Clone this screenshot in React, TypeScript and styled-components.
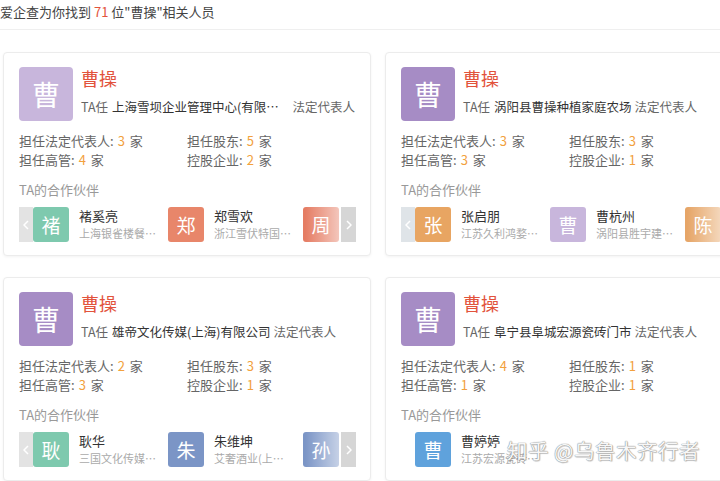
import React from "react";
import styled, { createGlobalStyle } from "styled-components";

const Global = createGlobalStyle`
  html, body { margin: 0; padding: 0; background: #fff; }
  body { font-family: "Noto Sans CJK SC", "Noto Sans", sans-serif; color: #333; }
  * { box-sizing: border-box; }
`;

const Page = styled.div`
  position: relative;
  width: 720px;
  height: 481px;
  overflow: hidden;
  background: #fff;
`;

const Header = styled.div`
  height: 30px;
  line-height: 24px;
  font-size: 13px;
  color: #444;
  border-bottom: 1px solid #efefef;
  white-space: nowrap;
`;

const Count = styled.span`
  color: #e2533c;
`;

const Grid = styled.div`
  display: grid;
  grid-template-columns: 368px 368px;
  grid-auto-rows: 204px;
  column-gap: 14px;
  row-gap: 21px;
  padding: 22px 0 0 3px;
`;

const Card = styled.div`
  background: #fff;
  border: 1px solid #ececec;
  border-radius: 4px;
  box-shadow: 0 1px 3px rgba(0, 0, 0, 0.05);
  padding: 14px 15px 0 15px;
  overflow: hidden;
`;

const Head = styled.div`
  display: flex;
  gap: 8px;
`;

const Avatar = styled.div<{ $bg: string }>`
  width: 54px;
  height: 54px;
  flex: none;
  border-radius: 4px;
  background: ${(p) => p.$bg};
  color: #fff;
  font-size: 28px;
  display: flex;
  align-items: center;
  justify-content: center;
`;

const Info = styled.div`
  display: flex;
  flex-direction: column;
  min-width: 0;
`;

const Name = styled.div`
  font-size: 18px;
  line-height: 22px;
  color: #e2533c;
`;

const Sub = styled.div`
  margin-top: 8px;
  font-size: 12.5px;
  line-height: 20px;
  color: #666;
  white-space: nowrap;
  display: flex;
  align-items: center;
`;

const Company = styled.span<{ $max?: number }>`
  color: #333;
  margin: 0 3px 0 4px;
  display: inline-block;
  max-width: ${(p) => (p.$max ? `${p.$max}px` : "none")};
  overflow: hidden;
  text-overflow: ellipsis;
  white-space: nowrap;
`;

const Role = styled.span<{ $gap: number }>`
  margin-left: ${(p) => p.$gap}px;
`;

const Stats = styled.div`
  margin-top: 10px;
  display: grid;
  grid-template-columns: 168px 1fr;
  font-size: 13px;
  line-height: 19px;
  color: #666;
  white-space: nowrap;
`;

const Num = styled.span`
  color: #f2a13d;
  margin: 0 5px 0 4px;
`;

const Label = styled.div`
  margin-top: 11px;
  font-size: 13px;
  line-height: 20px;
  color: #999;
`;

const Strip = styled.div`
  margin-top: 7px;
  height: 35px;
  display: flex;
  width: 337px;
`;

const Arrow = styled.div<{ $hide?: boolean; $bg?: string; $w: number }>`
  width: ${(p) => p.$w}px;
  flex: none;
  height: 35px;
  background: ${(p) => p.$bg || "#e3e3e3"};
  visibility: ${(p) => (p.$hide ? "hidden" : "visible")};
  display: flex;
  align-items: center;
  justify-content: center;
`;

const Track = styled.div`
  position: relative;
  width: 308px;
  flex: none;
  display: flex;
  overflow: hidden;
`;

const Fade = styled.div`
  position: absolute;
  top: 0;
  right: 0;
  width: 36px;
  height: 35px;
  background: linear-gradient(to right, rgba(255, 255, 255, 0), rgba(255, 255, 255, 0.6));
`;

const Partner = styled.div`
  width: 135px;
  flex: none;
  display: flex;
  gap: 10px;
`;

const PAvatar = styled.div<{ $bg: string }>`
  width: 36px;
  height: 35px;
  flex: none;
  border-radius: 3px;
  background: ${(p) => p.$bg};
  color: #fff;
  font-size: 19px;
  display: flex;
  align-items: center;
  justify-content: center;
`;

const PText = styled.div`
  display: flex;
  flex-direction: column;
  min-width: 0;
  width: 78px;
`;

const PName = styled.div`
  font-size: 13px;
  line-height: 18px;
  color: #333;
  white-space: nowrap;
`;

const PSub = styled.div`
  font-size: 11px;
  line-height: 16px;
  color: #aaa;
  white-space: nowrap;
  overflow: hidden;
  text-overflow: ellipsis;
`;

const Watermark = styled.div`
  position: absolute;
  right: 20px;
  top: 436px;
  font-size: 20.5px;
  line-height: 28px;
  letter-spacing: 0.5px;
  color: rgba(255, 255, 255, 0.94);
  text-shadow: 0 0 1px #888, 0 0 1px #888, 1px 1px 1px rgba(0, 0, 0, 0.2);
  white-space: nowrap;
`;

const Chevron = ({ dir }: { dir: "l" | "r" }) => (
  <svg width="6" height="10" viewBox="0 0 6 10">
    <polyline
      points={dir === "l" ? "5,1 1,5 5,9" : "1,1 5,5 1,9"}
      fill="none"
      stroke="#fff"
      strokeWidth="1.5"
    />
  </svg>
);

type P = { c: string; bg: string; name: string; sub: string };
type CardData = {
  bg: string;
  company: string;
  max?: number;
  stats: [number, number, number, number];
  partners: P[];
  left: boolean;
  right: boolean;
  leftBg?: string;
};

const cards: CardData[] = [
  {
    bg: "#c8b6dc",
    company: "上海雪坝企业管理中心(有限公司)",
    max: 170,
    stats: [3, 5, 4, 2],
    left: true,
    right: true,
    partners: [
      { c: "褚", bg: "#7ec9ae", name: "褚奚亮", sub: "上海银雀楼餐饮管理" },
      { c: "郑", bg: "#e8866a", name: "郑雪欢", sub: "浙江雪伏特国际贸易" },
      { c: "周", bg: "#e57c63", name: "周", sub: "" },
    ],
  },
  {
    bg: "#a68cc5",
    company: "涡阳县曹操种植家庭农场",
    stats: [3, 3, 3, 1],
    left: true,
    right: true,
    leftBg: "#dfe4e8",
    partners: [
      { c: "张", bg: "#e8a562", name: "张启朋", sub: "江苏久利鸿婺建设工程" },
      { c: "曹", bg: "#c8b6dc", name: "曹杭州", sub: "涡阳县胜宇建筑工程" },
      { c: "陈", bg: "#e6a567", name: "陈", sub: "" },
    ],
  },
  {
    bg: "#a68cc5",
    company: "雄帝文化传媒(上海)有限公司",
    stats: [2, 3, 3, 1],
    left: true,
    right: true,
    partners: [
      { c: "耿", bg: "#7ec9ae", name: "耿华", sub: "三国文化传媒(上海)" },
      { c: "朱", bg: "#7b95c6", name: "朱维坤", sub: "艾奢酒业(上海)有限" },
      { c: "孙", bg: "#7b95c6", name: "孙", sub: "" },
    ],
  },
  {
    bg: "#a68cc5",
    company: "阜宁县阜城宏源瓷砖门市",
    stats: [4, 1, 1, 1],
    left: false,
    right: false,
    partners: [{ c: "曹", bg: "#5fa2dc", name: "曹婷婷", sub: "江苏宏源瓷砖有限公司" }],
  },
];

const PersonCard = ({ d }: { d: CardData }) => (
  <Card>
    <Head>
      <Avatar $bg={d.bg}>曹</Avatar>
      <Info>
        <Name>曹操</Name>
        <Sub>
          TA任<Company $max={d.max}>{d.company}</Company>
          <Role $gap={d.max ? 8 : 0}>法定代表人</Role>
        </Sub>
      </Info>
    </Head>
    <Stats>
      <div>
        担任法定代表人:<Num>{d.stats[0]}</Num>家
      </div>
      <div>
        担任股东:<Num>{d.stats[1]}</Num>家
      </div>
      <div>
        担任高管:<Num>{d.stats[2]}</Num>家
      </div>
      <div>
        控股企业:<Num>{d.stats[3]}</Num>家
      </div>
    </Stats>
    <Label>TA的合作伙伴</Label>
    <Strip>
      <Arrow $w={14} $hide={!d.left} $bg={d.leftBg}>
        <Chevron dir="l" />
      </Arrow>
      <Track>
        {d.partners.map((p, i) => (
          <Partner key={i}>
            <PAvatar $bg={p.bg}>{p.c}</PAvatar>
            <PText>
              <PName>{p.name}</PName>
              <PSub>{p.sub}</PSub>
            </PText>
          </Partner>
        ))}
        {d.right && <Fade />}
      </Track>
      <Arrow $w={15} $hide={!d.right} $bg="#d6d6d6">
        <Chevron dir="r" />
      </Arrow>
    </Strip>
  </Card>
);

export default function App() {
  return (
    <Page>
      <Global />
      <Header>
        爱企查为你找到 <Count>71</Count> 位"曹操"相关人员
      </Header>
      <Grid>
        {cards.map((c, i) => (
          <PersonCard key={i} d={c} />
        ))}
      </Grid>
      <Watermark>知乎 @乌鲁木齐行者</Watermark>
    </Page>
  );
}
